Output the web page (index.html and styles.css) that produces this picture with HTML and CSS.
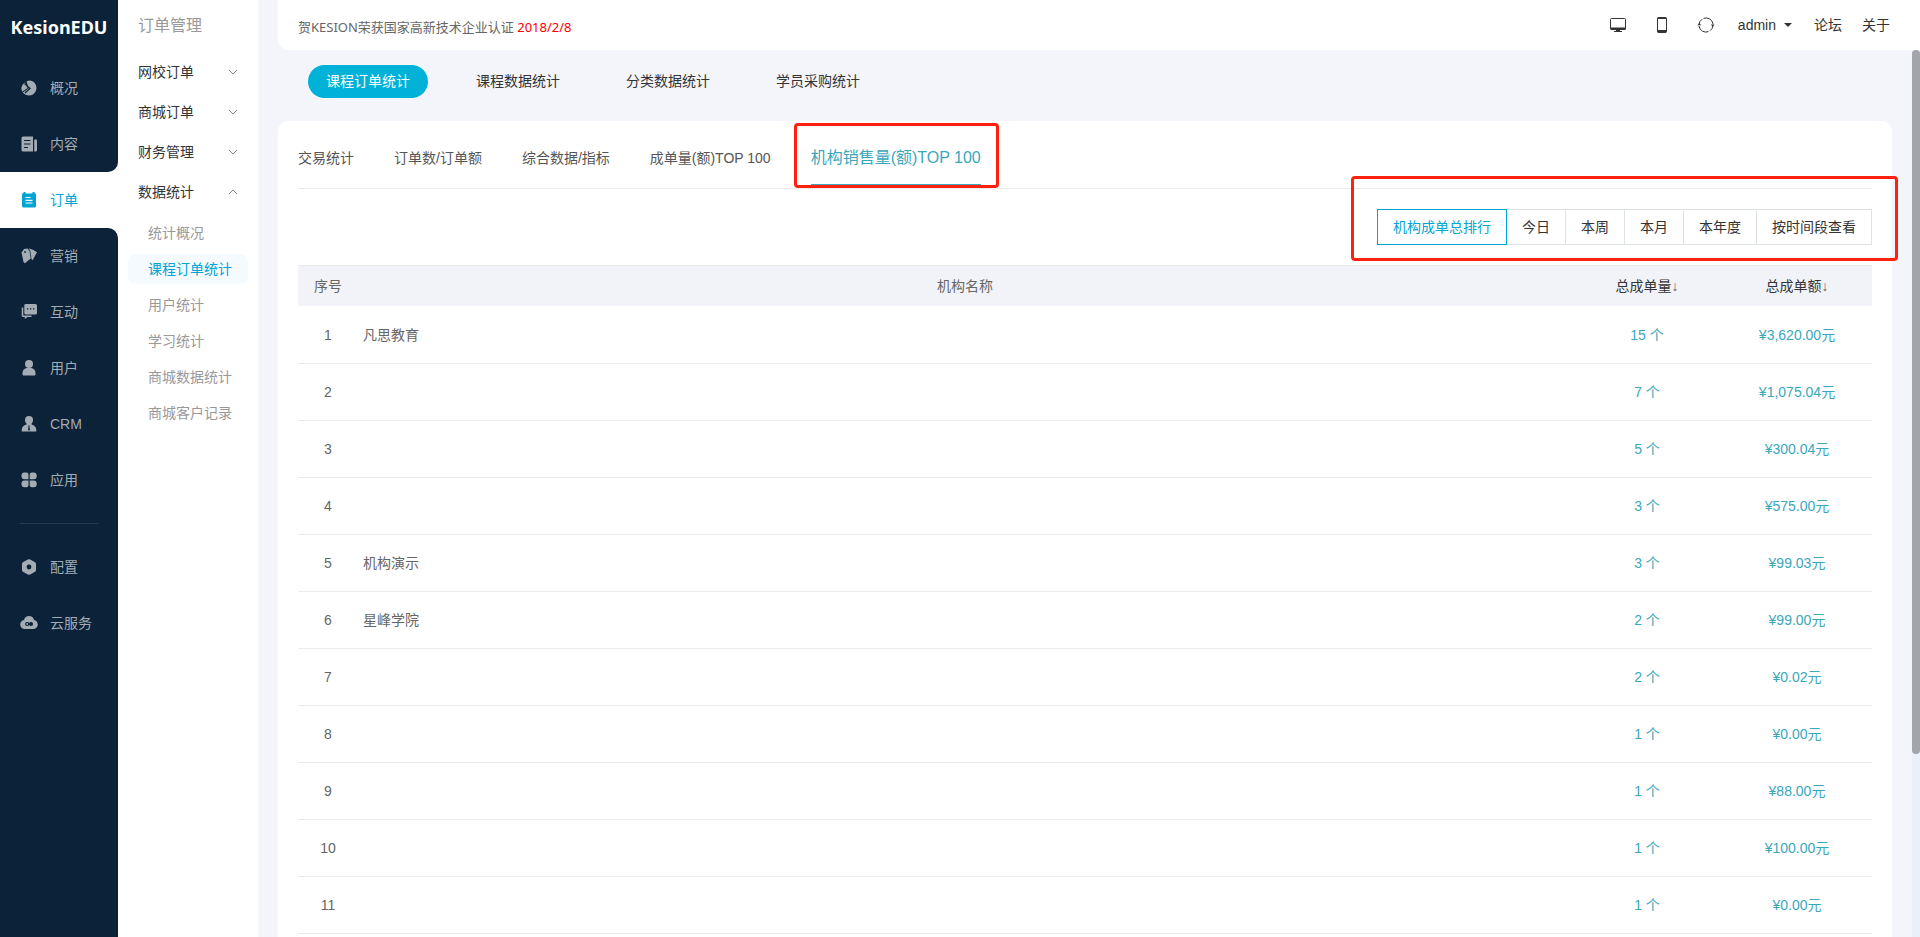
FILE: index.html
```html
<!DOCTYPE html>
<html lang="zh-CN">
<head>
<meta charset="utf-8">
<title>KesionEDU 订单管理</title>
<link rel="stylesheet" href="styles.css">
</head>
<body>
<div class="app">
  <nav class="sidebar" aria-label="主导航">
    <div class="side-block side-top">
      <a class="logo" href="#">KesionEDU</a>
      <a class="side-item" href="#"><svg class="side-icon" viewBox="0 0 18 18"><path d="M10 1.4a7.600 7.600 0 1 1-7.200 12.100L8.600 9.400 6.500 2.300A7.600 7.600 0 0 1 10 1.400z"/><path d="M5 3.400 7.600 9l-5.400 3.800A7.800 7.800 0 0 1 5 3.400z"/><path class="cut" d="m4.500 4.500 5.500 5L5 14"/></svg>概况</a>
      <a class="side-item" href="#"><svg class="side-icon" viewBox="0 0 18 18"><path d="M3 1.500h10v15H3a1.500 1.500 0 0 1-1.500-1.500V3A1.500 1.500 0 0 1 3 1.500zM14.200 4.500H16a1 1 0 0 1 1 1V15a1.500 1.500 0 0 1-1.500 1.500h-1.300z"/><path class="cut" d="M4 5.500h6.500M4 9h6.500M4 12.500h4"/></svg>内容</a>
    </div>
    <a class="side-item side-active" href="#" aria-current="page"><svg class="side-icon" viewBox="0 0 18 18"><path d="M2 3.500A1.500 1.500 0 0 1 3.500 2V1h2v1.500h7V1h2v1A1.500 1.500 0 0 1 16 3.500V15a1.500 1.500 0 0 1-1.500 1.500h-11A1.500 1.500 0 0 1 2 15z"/><path class="cut" d="M5.500 6.500h5M5.500 9.300h7M5.500 12h7"/></svg>订单</a>
    <div class="side-block side-bottom">
      <a class="side-item" href="#"><svg class="side-icon" viewBox="0 0 18 18"><path d="M1.500 5.500 4 2l3.500-.5 2 2.500 1.300 7.500-6 4.700L3.500 15z"/><path d="M8.800 1.600 13 2.800l4 2.400-4.400 8-1-1L10.200 4z"/><circle class="hole" cx="5" cy="5" r="0.900"/></svg>营销</a>
      <a class="side-item" href="#"><svg class="side-icon" viewBox="0 0 18 18"><path d="M5.500 1h10A1.500 1.500 0 0 1 17 2.500V10a1.500 1.500 0 0 1-1.500 1.500H5.500A1.500 1.500 0 0 1 4.300 10V2.500A1.500 1.500 0 0 1 5.500 1z"/><path d="M2 4.500h1.300v8h8.200V14H7.500L4.800 16v-2H3a1.300 1.300 0 0 1-1.300-1.300V5z"/><path class="hole" d="M7 5.300h1.300v1.300H7zM10 5.300h1.300v1.300H10zM13 5.300h1.300v1.300H13z"/></svg>互动</a>
      <a class="side-item" href="#"><svg class="side-icon" viewBox="0 0 18 18"><circle cx="9" cy="5" r="4"/><path d="M6.500 9h5c2.500.8 4 2.300 4 5v1.200c0 .8-.4 1.300-1.300 1.300H3.800c-.9 0-1.300-.5-1.300-1.300V14c0-2.700 1.500-4.200 4-5z"/></svg>用户</a>
      <a class="side-item" href="#"><svg class="side-icon" viewBox="0 0 18 18"><circle cx="9" cy="5" r="4"/><path d="M6.500 8h5v1.500c3 1 4.800 2.500 4.800 5.500v1.500H1.700V15c0-3 1.800-4.500 4.800-5.500z"/><path class="hole" d="m8.300 10.500h1.400l-.2 1.300.4 3L9 16l-.9-1.200.4-3z"/></svg>CRM</a>
      <a class="side-item" href="#"><svg class="side-icon" viewBox="0 0 18 18"><path d="M4.500 1.500h2a2 2 0 0 1 2 2v4.700H4.500a3 3 0 0 1-3-3v-.7a3 3 0 0 1 3-3zM11.700 1.500h2a3 3 0 0 1 3 3v.7a3 3 0 0 1-3 3H9.700V3.500a2 2 0 0 1 2-2zM4.500 9.500h4v4.700a2 2 0 0 1-2 2h-2a3 3 0 0 1-3-3v-.7a3 3 0 0 1 3-3zM9.700 9.500h4a3 3 0 0 1 3 3v.7a3 3 0 0 1-3 3h-2a2 2 0 0 1-2-2z"/></svg>应用</a>
      <hr class="side-rule">
      <a class="side-item" href="#"><svg class="side-icon" viewBox="0 0 18 18"><path d="M7.800 1.500q1.200-.6 2.400 0l4.500 2.400q1.300.7 1.300 2v6.200q0 1.300-1.300 2l-4.500 2.400q-1.200.6-2.400 0l-4.500-2.400q-1.300-.7-1.300-2V5.900q0-1.300 1.300-2z"/><circle class="hole" cx="9" cy="9" r="2.400"/></svg>配置</a>
      <a class="side-item" href="#"><svg class="side-icon" viewBox="0 0 18 18"><path d="M4 6C4.700 3.500 6.500 2 9 2s4.500 1.600 5 4c2.300.5 3.800 2.200 3.800 4.500 0 2.500-2 4.500-4.600 4.500H4.800C2.200 15 .2 13 .2 10.500.2 8.300 1.700 6.500 4 6z"/><circle class="cut" cx="7.200" cy="10" r="1.500"/><circle class="hole" cx="11" cy="10" r="2.100"/></svg>云服务</a>
    </div>
  </nav>

  <nav class="submenu" aria-label="订单管理">
    <h1 class="submenu-title">订单管理</h1>
    <button class="group" type="button">网校订单<svg class="chevron" viewBox="0 0 10 6"><path d="m1 1 4 4 4-4"/></svg></button>
    <button class="group" type="button">商城订单<svg class="chevron" viewBox="0 0 10 6"><path d="m1 1 4 4 4-4"/></svg></button>
    <button class="group" type="button">财务管理<svg class="chevron" viewBox="0 0 10 6"><path d="m1 1 4 4 4-4"/></svg></button>
    <button class="group" type="button" aria-expanded="true">数据统计<svg class="chevron" viewBox="0 0 10 6"><path d="m1 5 4-4 4 4"/></svg></button>
    <div class="sub-links">
      <a class="sub-link" href="#">统计概况</a>
      <a class="sub-link sub-link-active" href="#">课程订单统计</a>
      <a class="sub-link" href="#">用户统计</a>
      <a class="sub-link" href="#">学习统计</a>
      <a class="sub-link" href="#">商城数据统计</a>
      <a class="sub-link" href="#">商城客户记录</a>
    </div>
  </nav>

  <div class="page">
    <header class="topbar">
      <p class="notice">贺KESION荣获国家高新技术企业认证 <span class="notice-date">2018/2/8</span></p>
      <div class="tools">
        <button class="tool" type="button" aria-label="电脑端"><svg class="tool-icon" viewBox="0 0 18 18"><rect x="1.500" y="2.500" width="15" height="11" rx="1"/><path class="solid" d="M1.500 11.500h15v2.300h-15zM7 14h4v1H7zM5 15h8v1H5z"/></svg></button>
        <button class="tool" type="button" aria-label="手机端"><svg class="tool-icon" viewBox="0 0 18 18"><rect x="4.500" y="1.500" width="9" height="15" rx="1.500"/><path class="solid" d="M4.500 14h9v2.500h-9zM4.500 1.500h9V3h-9z"/></svg></button>
        <button class="tool" type="button" aria-label="刷新"><svg class="tool-icon" viewBox="0 0 18 18"><path d="M2 8.500A7 7 0 0 1 5 3.300M6.500 2.400A7 7 0 0 1 16 8M16 9.500a7 7 0 0 1-3 5.200M11.500 15.600A7 7 0 0 1 2 10"/><path class="solid" d="M.4 9.200 2.300 7l1.900 2.200zM13.800 8.500h3.800L15.700 10.800z"/></svg></button>
        <button class="tool account" type="button">admin<span class="caret"></span></button>
        <a class="tool" href="#">论坛</a>
        <a class="tool" href="#">关于</a>
      </div>
    </header>

    <main class="content">
      <nav class="pills" aria-label="统计分类">
        <a class="pill pill-active" href="#">课程订单统计</a>
        <a class="pill" href="#">课程数据统计</a>
        <a class="pill" href="#">分类数据统计</a>
        <a class="pill" href="#">学员采购统计</a>
      </nav>

      <section class="panel">
        <nav class="tabs" aria-label="报表">
          <a class="tab" href="#">交易统计</a>
          <a class="tab" href="#">订单数/订单额</a>
          <a class="tab" href="#">综合数据/指标</a>
          <a class="tab" href="#">成单量(额)TOP 100</a>
          <a class="tab tab-active" href="#">机构销售量(额)TOP 100<span class="mark mark-tab"></span></a>
        </nav>

        <div class="filters">
          <div class="segments">
            <button class="segment segment-active" type="button">机构成单总排行</button>
            <button class="segment" type="button">今日</button>
            <button class="segment" type="button">本周</button>
            <button class="segment" type="button">本月</button>
            <button class="segment" type="button">本年度</button>
            <button class="segment" type="button">按时间段查看</button>
            <span class="mark mark-segments"></span>
          </div>
        </div>

        <table class="ranking">
          <thead>
            <tr><th class="col-no">序号</th><th>机构名称</th><th class="col-value"><a class="sort" href="#">总成单量<span class="arrow">↓</span></a></th><th class="col-value"><a class="sort" href="#">总成单额<span class="arrow">↓</span></a></th></tr>
          </thead>
          <tbody>
            <tr><td>1</td><td class="name">凡思教育</td><td class="value">15 个</td><td class="value">¥3,620.00元</td></tr>
            <tr><td>2</td><td class="name"></td><td class="value">7 个</td><td class="value">¥1,075.04元</td></tr>
            <tr><td>3</td><td class="name"></td><td class="value">5 个</td><td class="value">¥300.04元</td></tr>
            <tr><td>4</td><td class="name"></td><td class="value">3 个</td><td class="value">¥575.00元</td></tr>
            <tr><td>5</td><td class="name">机构演示</td><td class="value">3 个</td><td class="value">¥99.03元</td></tr>
            <tr><td>6</td><td class="name">星峰学院</td><td class="value">2 个</td><td class="value">¥99.00元</td></tr>
            <tr><td>7</td><td class="name"></td><td class="value">2 个</td><td class="value">¥0.02元</td></tr>
            <tr><td>8</td><td class="name"></td><td class="value">1 个</td><td class="value">¥0.00元</td></tr>
            <tr><td>9</td><td class="name"></td><td class="value">1 个</td><td class="value">¥88.00元</td></tr>
            <tr><td>10</td><td class="name"></td><td class="value">1 个</td><td class="value">¥100.00元</td></tr>
            <tr><td>11</td><td class="name"></td><td class="value">1 个</td><td class="value">¥0.00元</td></tr>
          </tbody>
        </table>
      </section>
      <div class="scroll-track"><div class="scroll-thumb"></div></div>
    </main>
  </div>
</div>
</body>
</html>
```
FILE: styles.css
```css
* { box-sizing: border-box; }

body {
  margin: 0;
  font-family: "Liberation Sans", "Noto Sans CJK SC", sans-serif;
  font-size: 14px;
  line-height: 20px;
  color: #333;
  background: #f4f5fa;
}

a { color: inherit; text-decoration: none; }

button {
  margin: 0;
  padding: 0;
  border: 0;
  background: none;
  font: inherit;
  color: inherit;
  cursor: pointer;
}

.app { display: flex; height: 100vh; overflow: hidden; }

/* Main navigation */
.sidebar {
  display: flex;
  flex-direction: column;
  flex: 0 0 118px;
  background: #fff;
  color: #a3abb3;
}
.side-block { background: #0b2239; --ground: #0b2239; }
.side-top { border-bottom-right-radius: 10px; }
.side-bottom { flex: 1; border-top-right-radius: 10px; }
.logo {
  display: flex;
  align-items: center;
  justify-content: center;
  height: 60px;
  padding-bottom: 6px;
  font-family: "Noto Sans", sans-serif;
  font-size: 18px;
  font-weight: 700;
  color: #fff;
}
.side-item {
  display: flex;
  align-items: center;
  gap: 12px;
  height: 56px;
  padding-left: 20px;
}
.side-active { color: #00a5d3; --ground: #fff; }
.side-icon { width: 18px; height: 18px; fill: currentColor; }
.side-icon .cut { fill: none; stroke: var(--ground); stroke-width: 1.2; }
.side-icon .hole { fill: var(--ground); }
.side-rule {
  height: 1px;
  margin: 15px 20px;
  border: 0;
  background: #253a4f;
}

/* Second level menu */
.submenu { flex: 0 0 140px; background: #fff; }
.submenu-title {
  margin: 0;
  padding: 16px 20px;
  font-size: 16px;
  font-weight: 400;
  line-height: 20px;
  color: #999;
}
.group {
  display: flex;
  align-items: center;
  justify-content: space-between;
  width: 100%;
  height: 40px;
  padding: 0 20px;
}
.chevron { width: 10px; height: 6px; fill: none; stroke: #888; }
.sub-links {
  display: grid;
  gap: 6px;
  padding: 6px 10px;
}
.sub-link {
  padding: 5px 0 5px 20px;
  border-radius: 8px;
  color: #999;
  white-space: nowrap;
}
.sub-link-active { background: #f4fafd; color: #00a5d3; }

/* Top bar */
.page { display: flex; flex-direction: column; flex: 1; min-width: 0; }
.topbar {
  display: flex;
  flex: 0 0 50px;
  align-items: center;
  justify-content: space-between;
  margin-left: 20px;
  padding: 0 30px 8px 20px;
  border-bottom-left-radius: 10px;
  background: #fff;
}
.notice {
  margin: 0;
  padding-top: 12px;
  font-family: "Noto Sans", "Noto Sans CJK SC", sans-serif;
  font-size: 13px;
  color: #666;
}
.notice-date { color: #f00; }
.tools { display: flex; align-items: center; gap: 20px; padding-top: 8px; }
.tool { display: flex; align-items: center; }
.tool-icon {
  width: 18px;
  height: 18px;
  margin: 0 3px;
  fill: none;
  stroke: #333;
}
.tool-icon .solid { fill: #333; stroke: none; }
.account { gap: 8px; padding-right: 2px; }
.caret {
  border: 4px solid transparent;
  border-top-color: #333;
  border-bottom-width: 0;
}

/* Category pills */
.content { position: relative; flex: 1; min-height: 0; padding: 15px 28px 0 20px; }
.pills { display: flex; gap: 30px; padding: 0 30px 23px; }
.pill {
  width: 120px;
  padding: 6px 0 7px;
  border-radius: 17px;
  text-align: center;
}
.pill-active { background: #00b2d8; color: #fff; }

/* Report panel */
.panel { padding: 0 20px 20px; border-radius: 10px; background: #fff; }
.tabs {
  display: flex;
  align-items: flex-start;
  gap: 40px;
  height: 68px;
  border-bottom: 1px solid #ebebeb;
}
.tab {
  position: relative;
  display: flex;
  align-items: center;
  height: 65px;
  padding-top: 11px;
  border-bottom: 2px solid transparent;
  color: #555;
}
.tab-active { border-bottom-color: #3ba7ba; font-size: 16px; color: #3ba7ba; }
.filters { display: flex; justify-content: flex-end; padding: 20px 0; }
.segments { position: relative; display: flex; }
.segment {
  height: 36px;
  margin-left: -1px;
  padding: 0 15px;
  border: 1px solid #dde3e5;
}
.segment-active { z-index: 1; border-color: #00a5d3; color: #00a5d3; }

/* Red call-out frames drawn over the panel */
.mark {
  position: absolute;
  z-index: 2;
  border: 3px solid #ff2010;
  border-radius: 4px;
  pointer-events: none;
}
.mark-tab { inset: 2px -18px -4px -17px; }
.mark-segments { inset: -33px -26px -16px -27px; }

/* Ranking table */
.ranking {
  width: 100%;
  table-layout: fixed;
  border-collapse: separate;
  border-spacing: 0;
  color: #666;
  text-align: center;
}
.ranking th {
  height: 42px;
  padding: 0;
  border-top: 1px solid #ebebeb;
  border-bottom: 1px solid #fff;
  background: #f2f3f8;
  font-weight: 400;
}
.ranking td { height: 57px; padding: 0; border-bottom: 1px solid #ebebeb; }
.col-no { width: 60px; }
.col-value { width: 150px; }
.ranking .name { padding-left: 5px; text-align: left; }
.ranking .value { color: #3ba7ba; }
.sort { color: #333; }
.arrow { color: #666; font-family: "Liberation Serif", serif; }

/* Scroll bar of the content area */
.scroll-track {
  position: absolute;
  top: 0;
  right: 0;
  bottom: 0;
  width: 8px;
  background: #ebeff9;
}
.scroll-thumb { height: 79.4%; border-radius: 4px; background: #a2a6ab; }
```
